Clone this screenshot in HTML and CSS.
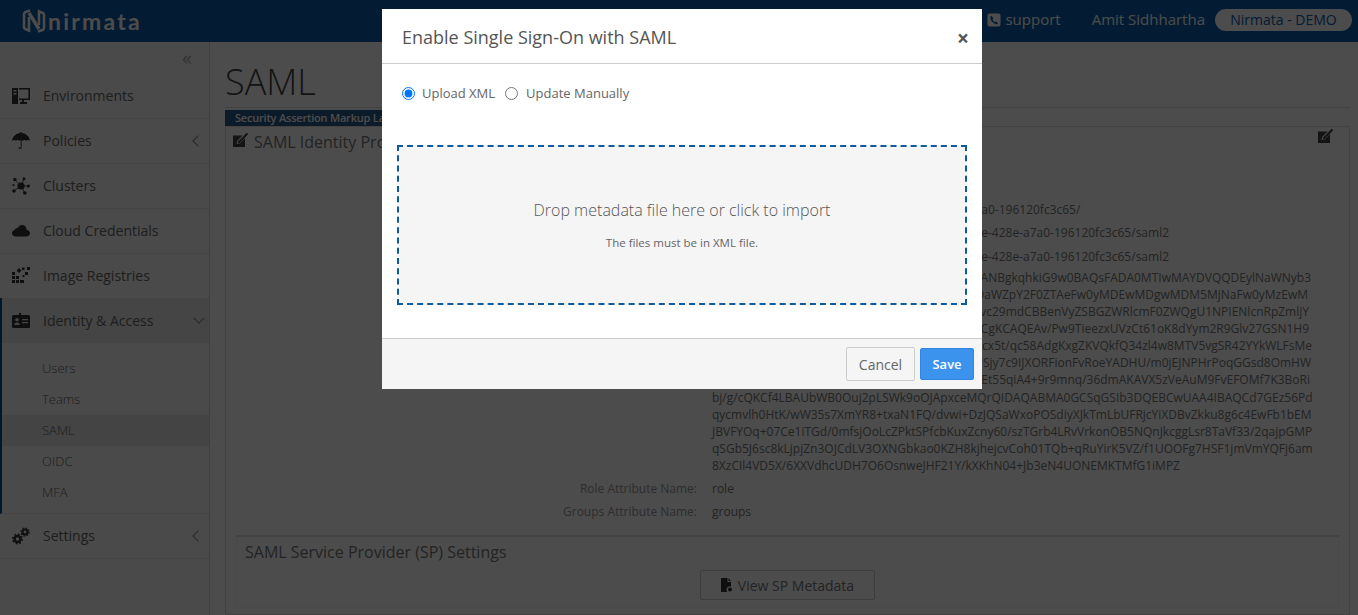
FILE: index.html
```html
<!DOCTYPE html>
<html lang="en">
<head>
    <meta charset="UTF-8">
    <meta name="viewport" content="width=device-width, initial-scale=1.0">
    <title>SAML - Nirmata</title>
    <link rel="stylesheet" href="styles.css">
</head>
<body>
    <header class="topbar">
        <div class="logo">
            <svg class="logo-mark" viewBox="0 0 24 26" fill="none" stroke="currentColor" stroke-width="2.6">
                <path d="M8 2.5 L3.5 4 Q2 4.6 2 6.5 V19 Q2 20.5 3.2 21 L7 22.5 V9"/>
                <path d="M16 23.5 L20.5 22 Q22 21.4 22 19.5 V7 Q22 5.5 20.8 5 L17 3.5 V17"/>
                <path d="M7 5 L17 21" stroke-width="3.4"/>
            </svg>
            <span class="logo-text">nirmata</span>
        </div>
        <div class="topbar-right">
            <a class="support">
                <svg class="phone-icon" viewBox="0 0 14 14"><path fill="currentColor" fill-rule="evenodd" d="M2.5 0.5h9a2 2 0 0 1 2 2v9a2 2 0 0 1-2 2h-9a2 2 0 0 1-2-2v-9a2 2 0 0 1 2-2zM4.6 2.8L3.3 3.5C3 5 3.6 7 5.1 8.8c1.5 1.7 3.4 2.6 5 2.5l1-1.2-2.2-1.7-1 .8C7 8.800 6 7.800 5.500 6.500l.9-1z"/></svg>
                support
            </a>
            <span class="user-name">Amit Sidhhartha</span>
            <span class="tenant">Nirmata - DEMO</span>
        </div>
    </header>

    <div class="layout">
        <nav class="sidebar">
            <div class="collapse">&laquo;</div>
            <ul class="nav">
                <li class="nav-item">
                    <svg class="nav-icon" viewBox="0 0 18 18"><path fill="currentColor" fill-rule="evenodd" d="M0 1h6v16H0zM1.500 3v1.500h3V3zM1.500 6v1.500h3V6zM7 1h11v12h-6v2h3v2H8v-2h2v-2H7v-1.600h9.400V2.600H7z"/></svg>
                    <span>Environments</span>
                </li>
                <li class="nav-item">
                    <svg class="nav-icon" viewBox="0 0 18 18"><path fill="currentColor" d="M8.400 0h1.200v1C14 1.300 17.400 4.500 18 8.800c-1-1-2.600-1-3.600 0-1-1-2.600-1-3.600 0-.3-.3-.7-.5-1.200-.6v7.300c0 2-2.900 2-2.900 0v-.6h.9v.6c0 .9 1.100.9 1.100 0V8.200c-.5.100-.9.300-1.200.6-1-1-2.600-1-3.600 0-1-1-2.600-1-3.900 0C.6 4.500 4 1.300 8.400 1z"/></svg>
                    <span>Policies</span>
                    <span class="chevron-left"></span>
                </li>
                <li class="nav-item">
                    <svg class="nav-icon" viewBox="0 0 18 18"><g fill="currentColor"><circle cx="9" cy="9" r="3.600"/><circle cx="2.800" cy="2.500" r="1.800"/><circle cx="12" cy="1.800" r="1.500"/><circle cx="16.400" cy="9" r="1.600"/><circle cx="12.800" cy="16" r="1.800"/><circle cx="2" cy="14" r="1.800"/><circle cx="1.500" cy="8" r="1.100"/></g><path stroke="currentColor" stroke-width=".8" d="M2.800 2.500L9 9M12 1.800L9 9M16.400 9H9M12.800 16L9 9M2 14l7-5"/></svg>
                    <span>Clusters</span>
                </li>
                <li class="nav-item">
                    <svg class="nav-icon" viewBox="0 0 18 18"><path fill="currentColor" d="M3.800 14.500C1.600 14.500 0 13 0 11.200c0-1.700 1.200-3 2.900-3.200C3.200 6.600 4.500 5.700 5.900 6c.7-1.800 2.300-3 4.200-3 2.500 0 4.500 2 4.500 4.600v.4c1.900.2 3.400 1.500 3.400 3.200 0 2-1.700 3.300-3.800 3.300z"/></svg>
                    <span>Cloud Credentials</span>
                </li>
                <li class="nav-item">
                    <svg class="nav-icon" viewBox="0 0 18 18"><path fill="currentColor" d="M0 5h3v3H0zM0 9h3v3H0zM0 13h3v3H0zM4 9h3v3H4zM4 13h3v3H4zM8 13h4v3H8zM4.500 3.500L7 1l2.500 2.500L7 6zM10 .5h2.500V3H10zM15 0h3v3h-3zM13 5h3v3h-3zM10.500 8h2v2h-2z"/></svg>
                    <span>Image Registries</span>
                </li>
                <li class="nav-item nav-item-open">
                    <svg class="nav-icon" viewBox="0 0 18 18"><path fill="currentColor" fill-rule="evenodd" d="M1.500 3H7V1h2v2h7.500A1.500 1.500 0 0 1 18 4.500v10a1.500 1.500 0 0 1-1.500 1.500h-15A1.500 1.500 0 0 1 0 14.500v-10A1.500 1.500 0 0 1 1.500 3zM5 6a1.800 1.800 0 1 0 0 3.600A1.800 1.800 0 0 0 5 6zM2.300 13h5.400c0-3.200-5.400-3.200-5.400 0zM10 7v1.300h6V7zM10 10v1.300h6V10z"/></svg>
                    <span>Identity &amp; Access</span>
                    <span class="chevron-down"></span>
                </li>
                <li class="subnav">
                    <a class="subnav-item">Users</a>
                    <a class="subnav-item">Teams</a>
                    <a class="subnav-item subnav-item-active">SAML</a>
                    <a class="subnav-item">OIDC</a>
                    <a class="subnav-item">MFA</a>
                </li>
                <li class="nav-item">
                    <svg class="nav-icon" viewBox="0 0 18 18"><g fill="none" stroke="currentColor"><circle cx="5.500" cy="12" r="3" stroke-width="2.600"/><circle cx="13" cy="5" r="2.500" stroke-width="2.200"/><circle cx="5.500" cy="12" r="4.800" stroke-width="1.400" stroke-dasharray="1.800 1.950"/><circle cx="13" cy="5" r="4" stroke-width="1.300" stroke-dasharray="1.500 1.640"/></g></svg>
                    <span>Settings</span>
                    <span class="chevron-left"></span>
                </li>
            </ul>
        </nav>

        <main class="content">
            <h1 class="page-title">SAML</h1>
            <div class="panel-label">Security Assertion Markup Language (SAML) single sign-on settings</div>
            <section class="panel">
                <div class="panel-head">
                    <svg class="edit-icon" viewBox="0 0 16 16"><path fill="currentColor" d="M0 3.500h9.500L4.300 8.700 3.500 12l3.300-.8 5.200-5.200V15H0z"/><path fill="currentColor" d="M5.300 9.200L13.700.8l1.500 1.500-8.400 8.400-2 .5z"/></svg>
                    <h2 class="panel-title">SAML Identity Provider (IdP) Settings</h2>
                    <svg class="edit-icon edit-icon-right" viewBox="0 0 16 16"><path fill="currentColor" d="M0 3.500h9.500L4.300 8.700 3.500 12l3.300-.8 5.200-5.200V15H0z"/><path fill="currentColor" d="M5.300 9.200L13.700.8l1.500 1.500-8.400 8.400-2 .5z"/></svg>
                </div>
                <dl class="fields">
                    <dt>Status:</dt>
                    <dd>Enabled</dd>
                    <dt>Identity Provider:</dt>
                    <dd>Azure AD</dd>
                    <dt>Entity ID:</dt>
                    <dd>https://sts.windows.net/5d1e6a70-8c2b-428e-a7a0-196120fc3c65/</dd>
                    <dt>Sign-On URL:</dt>
                    <dd>https://login.microsoftonline.com/5d1e6a70-8c2e-428e-a7a0-196120fc3c65/saml2</dd>
                    <dt>Logout URL:</dt>
                    <dd>https://login.microsoftonline.com/5d1e6a70-8c2e-428e-a7a0-196120fc3c65/saml2</dd>
                    <dt class="cert-label">Certificate:</dt>
                    <dd class="cert">
                        <div class="cert-line cert-end-1">MIIC8DCCAdigAwIBAgIQWmT0Fq2vK1hPcANBgkqhkiG9w0BAQsFADA0MTIwMAYDVQQDEylNaWNyb3</div>
                        <div class="cert-line cert-end-4">c29mdCBBenVyZSBGZWRlcmF0ZWQgU1NPIDaWZpY2F0ZTAeFw0yMDEwMDgwMDM5MjNaFw0yMzEwM</div>
                        <div class="cert-line cert-end-3">DgwMDM5MjNaMDQxMjAwBgNVBAMTKU1pY3Jvc29mdCBBenVyZSBGZWRlcmF0ZWQgU1NPIENlcnRpZmljY</div>
                        <div class="cert-line cert-end-3">XRlMIIBIjANBgkqhkiG9w0BAQEFAAOCAQ8AMIIBCgKCAQEAv/Pw9TieezxUVzCt61oK8dYym2R9Glv27GSN1H9</div>
                        <div class="cert-line cert-end-0">kW3nTq8ZpL0vYbR7dUfXa2Mcx5t/qc58AdgKxgZKVQkfQ34zl4w8MTV5vgSR42YYkWLFsMe</div>
                        <div class="cert-line cert-end-1">pX2hN6tGwQ9rLe4yVzK1oBf0aUSjy7c9IJXORFionFvRoeYADHU/m0jEJNPHrPoqGGsd8OmHW</div>
                        <div class="cert-line cert-end-2">T7mY3cWq1ZsKd8nHgP5xVb2RoEt55qiA4+9r9mnq/36dmAKAVX5zVeAuM9FvEFOMf7K3BoRi</div>
                        <div class="cert-line">bj/g/cQKCf4LBAUbWB0Ouj2pLSWk9oOJApxceMQrQIDAQABMA0GCSqGSIb3DQEBCwUAA4IBAQCd7GEz56Pd</div>
                        <div class="cert-line">qycmvlh0HtK/wW35s7XmYR8+txaN1FQ/dvwi+DzJQSaWxoPOSdiyXJkTmLbUFRjcYiXDBvZkku8g6c4EwFb1bEM</div>
                        <div class="cert-line">JBVFYOq+07Ce1iTGd/0mfsjOoLcZPktSPfcbKuxZcny60/szTGrb4LRvVrkonOB5NQnJkcggLsr8TaVf33/2qajpGMP</div>
                        <div class="cert-line">qSGb5J6sc8kLjpjZn3OJCdLV3OXNGbkao0KZH8kjhejcvCoh01TQb+qRuYirK5VZ/f1UOOFg7HSF1jmVmYQFj6am</div>
                        <div class="cert-line">8XzCIl4VD5X/6XXVdhcUDH7O6OsnweJHF21Y/kXKhN04+Jb3eN4UONEMKTMfG1iMPZ</div>
                    </dd>
                    <dt>Role Attribute Name:</dt>
                    <dd>role</dd>
                    <dt>Groups Attribute Name:</dt>
                    <dd>groups</dd>
                </dl>
                <section class="sp-settings">
                    <h2 class="panel-title">SAML Service Provider (SP) Settings</h2>
                    <div class="sp-actions">
                        <button class="btn-metadata">
                            <svg class="file-icon" viewBox="0 0 12 14"><path fill="currentColor" d="M0 0h6.500v4H10v4.500a3.500 3.500 0 0 0-3.800 5.500H0zM7.500 0L10 3H7.500z"/><circle cx="9" cy="11.500" r="2" fill="currentColor"/></svg>
                            View SP Metadata
                        </button>
                    </div>
                </section>
            </section>
        </main>
    </div>

    <div class="backdrop">
        <div class="modal">
            <div class="modal-header">
                <h3 class="modal-title">Enable Single Sign-On with SAML</h3>
                <span class="modal-close">&times;</span>
            </div>
            <div class="modal-body">
                <div class="radio-row">
                    <label class="radio"><input type="radio" name="mode" checked> Upload XML</label>
                    <label class="radio"><input type="radio" name="mode"> Update Manually</label>
                </div>
                <div class="dropzone">
                    <div class="dropzone-title">Drop metadata file here or click to import</div>
                    <div class="dropzone-note">The files must be in XML file.</div>
                </div>
            </div>
            <div class="modal-footer">
                <button class="btn btn-cancel">Cancel</button>
                <button class="btn btn-save">Save</button>
            </div>
        </div>
    </div>
</body>
</html>
```

FILE: styles.css
```css
* {
    box-sizing: border-box;
}
html, body {
    height: 615px;
    overflow: hidden;
}
body {
    margin: 0;
    font-family: "Open Sans", Arial, sans-serif;
    font-size: 12px;
    line-height: 1.428;
    color: #777;
    background: #fff;
}

/* top bar */
.topbar {
    height: 42px;
    display: flex;
    justify-content: space-between;
    align-items: center;
    background: #0a5eab;
    color: #fff;
}
.logo {
    display: flex;
    align-items: center;
    padding-left: 22px;
    gap: 2px;
}
.logo-mark {
    width: 24px;
    height: 26px;
}
.logo-text {
    font-family: Lato, Arial, sans-serif;
    font-size: 23px;
    font-weight: 700;
    letter-spacing: 2.2px;
    line-height: 26px;
}
.topbar-right {
    display: flex;
    align-items: center;
    padding: 0 6px 2px 0;
    font-size: 15px;
}
.support {
    display: flex;
    align-items: center;
    gap: 4px;
    margin-right: 31px;
}
.phone-icon {
    width: 14px;
    height: 14px;
}
.user-name {
    margin-right: 10px;
}
.tenant {
    width: 137px;
    height: 22px;
    line-height: 22px;
    text-align: center;
    border-radius: 11px;
    background: #fff;
    color: #0a5eab;
    font-size: 14px;
}

/* sidebar */
.layout {
    display: flex;
    height: 573px;
}
.sidebar {
    width: 210px;
    flex: none;
    background: #f7f7f7;
    border-right: 1px solid #d8d8d8;
}
.collapse {
    height: 32px;
    padding: 4px 17px 0 0;
    text-align: right;
    font-size: 20px;
    line-height: 24px;
    color: #aaa;
}
.nav {
    list-style: none;
    margin: 0;
    padding: 0;
}
.nav-item {
    height: 45px;
    display: flex;
    align-items: center;
    padding-left: 12px;
    border-bottom: 1px solid #e3e3e3;
    font-size: 14px;
    color: #666;
}
.nav-item span:first-of-type {
    margin-left: 13px;
}
.nav-item-open {
    margin-top: -1px;
    background: #e6e6e6;
    border-left: 2px solid #0a4f90;
    padding-left: 10px;
    border-bottom: 0;
}
.nav-icon {
    width: 18px;
    height: 18px;
    flex: none;
    color: #333;
}
.chevron-left,
.chevron-down {
    width: 8px;
    height: 8px;
    margin-left: auto;
    border-left: 1px solid #888;
    border-bottom: 1px solid #888;
}
.chevron-left {
    margin-right: 7px;
    transform: rotate(45deg);
}
.chevron-down {
    margin-right: 6px;
    transform: rotate(-45deg) translate(2px, -2px);
}
.subnav {
    display: block;
    height: 171px;
    padding-top: 10px;
    border-left: 2px solid #0a4f90;
    border-bottom: 1px solid #e3e3e3;
}
.subnav-item {
    display: block;
    height: 31px;
    line-height: 30px;
    padding-left: 40px;
    font-size: 13px;
    font-weight: 300;
    color: #666;
}
.subnav-item-active {
    background: #e3e3e3;
}

/* main column */
.content {
    flex: 1;
    padding: 0 8px 0 15px;
}
.page-title {
    height: 66px;
    margin: 0;
    padding-top: 18px;
    border-bottom: 1px solid #ddd;
    font-size: 36px;
    font-weight: 300;
    line-height: 44px;
    color: #444;
}
.panel-label {
    width: 560px;
    height: 16px;
    margin-top: 2px;
    padding-left: 10px;
    background: #2a5a8a;
    color: #fff;
    font-size: 11px;
    font-weight: 600;
    letter-spacing: -0.2px;
    line-height: 16px;
    white-space: nowrap;
    overflow: hidden;
}
.panel {
    height: 489px;
    border: 1px solid #ddd;
}
.panel-head {
    display: flex;
    align-items: center;
    height: 25px;
    padding: 5px 15px 0 7px;
}
.panel-title {
    margin: 0;
    font-size: 16px;
    font-weight: 400;
    line-height: 22px;
    color: #777;
}
.edit-icon {
    width: 16px;
    height: 16px;
    margin: -4px 5px 0 0;
    color: #444;
}
.edit-icon-right {
    align-self: flex-start;
    margin: -4px 0 0 auto;
}
.fields {
    display: grid;
    grid-template-columns: 471px 1fr;
    column-gap: 15px;
    margin: 0;
    padding-top: 0;
}
.fields dt {
    text-align: right;
    padding: 3px 0;
    color: #999;
}
.fields dd {
    margin: 0;
    padding: 3px 0;
    white-space: nowrap;
}
.fields .cert {
    width: 600px;
    margin-top: -2px;
}
.fields .cert-label {
    margin-top: -2px;
}
.cert-line {
    text-align: left;
}
.cert-end-0, .cert-end-1, .cert-end-2, .cert-end-3, .cert-end-4 {
    text-align: right;
}
.cert-end-1 { padding-right: 1px; }
.cert-end-2 { padding-right: 2px; }
.cert-end-3 { padding-right: 3px; }
.cert-end-4 { padding-right: 4px; }

.sp-settings {
    margin: 12px 10px 0;
    padding: 4px 8px;
    height: 72px;
    border: 1px solid #f5f5f5;
    border-top: 2px solid #d5dde5;
}
.sp-actions {
    display: flex;
    justify-content: center;
    margin-top: 7px;
}
.btn-metadata {
    width: 175px;
    height: 30px;
    display: flex;
    align-items: center;
    justify-content: center;
    gap: 5px;
    background: #fff;
    border: 1px solid #ccc;
    border-radius: 2px;
    font-family: inherit;
    font-size: 14px;
    color: #777;
}
.file-icon {
    width: 12px;
    height: 14px;
    color: #333;
}

/* modal */
.backdrop {
    position: fixed;
    top: 0;
    right: 0;
    bottom: 0;
    left: 0;
    padding: 9px 0 0 382px;
    background: rgba(0, 0, 0, 0.7);
}
.modal {
    width: 600px;
    height: 380px;
    display: flex;
    flex-direction: column;
    background: #fff;
    color: #666;
}
.modal-header {
    height: 55px;
    flex: none;
    display: flex;
    align-items: center;
    justify-content: space-between;
    padding: 4px 13px 0 20px;
    border-bottom: 1px solid #ccc;
}
.modal-title {
    margin: 0;
    font-size: 18px;
    font-weight: 400;
    color: #555;
}
.modal-close {
    font-size: 21px;
    font-weight: 700;
    line-height: 20px;
    color: #555;
}
.modal-body {
    flex: 1;
    padding: 20px 15px 0;
}
.radio-row {
    display: flex;
    height: 18px;
    padding-left: 5px;
    gap: 10px;
}
.radio {
    display: flex;
    align-items: center;
    font-size: 13px;
    line-height: 18px;
    gap: 7px;
}
.radio input {
    width: 13px;
    height: 13px;
    margin: 0;
}
.radio + .radio input {
    margin-right: 1px;
}
.dropzone {
    height: 160px;
    margin-top: 43px;
    padding-bottom: 2px;
    display: flex;
    flex-direction: column;
    align-items: center;
    justify-content: center;
    gap: 14px;
    background: #f5f5f5;
    border: 2px dashed #0f5a9c;
}
.dropzone-title {
    font-size: 16px;
    font-weight: 300;
    line-height: 22px;
    color: #555;
}
.dropzone-note {
    font-size: 11.5px;
    line-height: 15px;
}
.modal-footer {
    height: 51px;
    flex: none;
    display: flex;
    align-items: center;
    justify-content: flex-end;
    gap: 5px;
    padding-right: 8px;
    background: #f5f5f5;
    border-top: 1px solid #ccc;
}
.btn {
    font-family: inherit;
    font-size: 14px;
    border-radius: 2px;
    cursor: pointer;
}
.btn-cancel {
    width: 69px;
    height: 34px;
    background: #f5f5f5;
    border: 1px solid #ccc;
    color: #666;
}
.btn-save {
    width: 54px;
    height: 32px;
    background: #3b93ee;
    border: 1px solid #2f86e0;
    color: #fff;
    font-weight: 600;
    font-size: 13px;
}
```
